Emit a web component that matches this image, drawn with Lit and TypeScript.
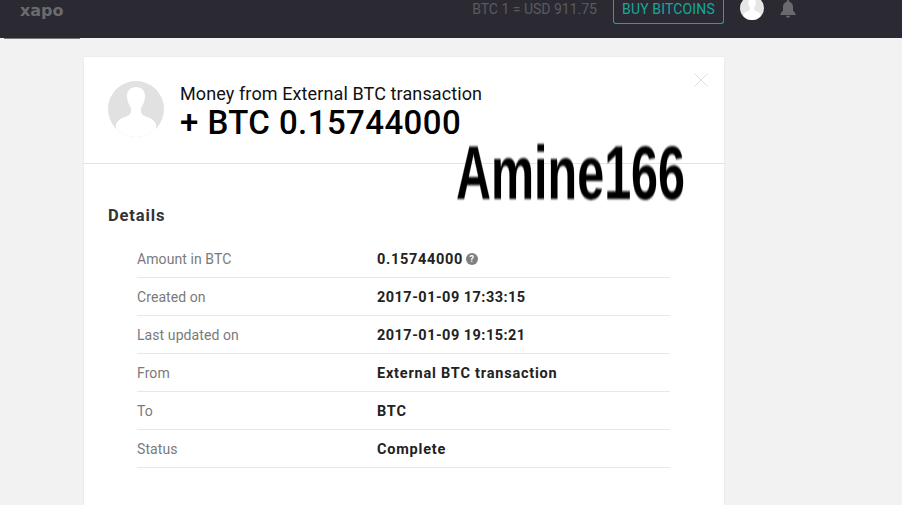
import { LitElement, html, css } from "lit";
import { customElement } from "lit/decorators.js";

const rows: [string, string, string][] = [
  ["Amount in BTC", "0.15744000", "num"],
  ["Created on", "2017-01-09 17:33:15", ""],
  ["Last updated on", "2017-01-09 19:15:21", ""],
  ["From", "External BTC transaction", "wide"],
  ["To", "BTC", "wide"],
  ["Status", "Complete", "wide"],
];

@customElement("app-root")
export class AppRoot extends LitElement {
  static styles = css`
    :host { display: block; height: 505px; overflow: hidden; background: #f2f2f2; font-family: Roboto, "Liberation Sans", sans-serif; position: relative; }
    .top { height: 38px; background: #2b2a33; display: flex; align-items: flex-start; position: relative; }
    .logo { width: 76px; margin-left: 4px; height: 39px; box-sizing: border-box; border-bottom: 1px solid #777; padding-left: 16px; font: 700 16px/21px "DejaVu Sans", sans-serif; color: #6b6b6f; letter-spacing: 0; }
    .spacer { flex: 1; }
    .rate { font-size: 14px; line-height: 19px; color: #5a5a60; margin-right: 16px; }
    .buy { width: 111px; height: 24px; box-sizing: border-box; border: 1px solid #14a89c; border-top: none; border-radius: 0 0 3px 3px; color: #14a89c; font-size: 14px; line-height: 18px; text-align: center; margin-right: 16px; letter-spacing: 0.15px; }
    .avatar { width: 24px; height: 24px; margin-top: -4px; margin-right: 16px; display: block; }
    .bell { width: 16px; height: 18px; margin-right: 106px; display: block; }
    .card { position: absolute; left: 84px; top: 57px; width: 640px; height: 470px; background: #fff; box-shadow: 0 0 2px rgba(0,0,0,0.08); }
    .head { height: 107px; box-sizing: border-box; border-bottom: 1px solid #e4e4e4; display: flex; padding: 24px 0 0 24px; position: relative; }
    .head svg.pic { width: 56px; height: 56px; margin-right: 16px; flex: none; }
    .t1 { font-size: 18px; line-height: 24px; color: #111; margin-top: 1px; letter-spacing: 0.11px; }
    .t2 { font-size: 33px; line-height: 34px; color: #000; font-weight: 500; letter-spacing: 0.43px; margin-top: 0; }
    .close { position: absolute; left: 610px; top: 16px; width: 14px; height: 14px; }
    h2 { margin: 42px 0 0 24px; font-size: 16.5px; line-height: 20px; font-weight: 700; color: #333; letter-spacing: 0.85px; }
    .rows { margin: 14px 54px 0 53px; }
    .row { height: 38px; box-sizing: border-box; border-bottom: 1px solid #e8e8e8; display: flex; align-items: center; font-size: 14px; color: #7a7a7a; letter-spacing: 0.08px; }
    .k { width: 240px; flex: none; }
    .v { font-size: 14.5px; font-weight: 700; color: #222; letter-spacing: 0.47px; display: flex; align-items: center; gap: 3px; padding-top: 1px; }
    .v.num { letter-spacing: 0.7px; }
    .v.wide { letter-spacing: 0.79px; }
    .q { width: 12px; height: 12px; display: block; }
    .mark { position: absolute; left: 456px; top: 116px; font: 700 48px/72px "Liberation Sans", sans-serif; color: #000; transform-origin: 0 0; transform: scale(1.01, 1.6); white-space: nowrap; filter: blur(0.5px); }
  `;

  render() {
    return html`
      <div class="top">
        <div class="logo">xapo</div>
        <div class="spacer"></div>
        <div class="rate">BTC 1 = USD 911.75</div>
        <div class="buy">BUY BITCOINS</div>
        <svg class="avatar" viewBox="0 0 56 56">
          <defs><clipPath id="a"><circle cx="28" cy="28" r="28" /></clipPath></defs>
          <circle cx="28" cy="28" r="28" fill="#e6e6e6" />
          <path clip-path="url(#a)" d="M28 6c-5.500 0-9 3.500-9 9 0 5 2 9 4 12v4c0 2-3 4-6 5-4 1-7 3-9 7v17h40V43c-2-4-5-6-9-7-3-1-6-3-6-5v-4c2-3 4-7 4-12 0-5.500-3.500-9-9-9z" fill="#fff" />
        </svg>
        <svg class="bell" viewBox="0 0 16 18">
          <path d="M8 0a1.300 1.300 0 0 0-1.300 1.300v.5C4.200 2.400 3 4.500 3 7v3.500L.5 13.500V15h15v-1.500L13 10.500V7c0-2.500-1.200-4.600-3.700-5.200v-.5A1.300 1.300 0 0 0 8 0zM6 15.800a2 2 0 0 0 4 0z" fill="#6a6a6e" />
        </svg>
      </div>
      <div class="card">
        <div class="head">
          <svg class="pic" viewBox="0 0 56 56">
            <defs><clipPath id="c"><circle cx="28" cy="28" r="28" /></clipPath></defs>
            <circle cx="28" cy="28" r="28" fill="#e1e1e1" />
            <path clip-path="url(#c)" d="M28 6c-5.500 0-9 3.500-9 9 0 5 2 9 4 12v4c0 2-3 4-6 5-4 1-7 3-9 7v17h40V43c-2-4-5-6-9-7-3-1-6-3-6-5v-4c2-3 4-7 4-12 0-5.500-3.500-9-9-9z" fill="#fff" />
          </svg>
          <div>
            <div class="t1">Money from External BTC transaction</div>
            <div class="t2">+ BTC 0.15744000</div>
          </div>
          <svg class="close" viewBox="0 0 14 14"><path d="M.5.500l13 13M13.500.500l-13 13" stroke="#ddd" stroke-width="1" fill="none" /></svg>
        </div>
        <h2>Details</h2>
        <div class="rows">
          ${rows.map(([k, v, c], i) => html`
            <div class="row">
              <div class="k">${k}</div>
              <div class="v ${c}">${v}${i === 0 ? html`<svg class="q" viewBox="0 0 12 12"><circle cx="6" cy="6" r="6" fill="#808080" /><text x="6" y="9.200" text-anchor="middle" font-size="9" font-weight="700" fill="#fff" font-family="Roboto">?</text></svg>` : ""}</div>
            </div>`)}
        </div>
      </div>
      <div class="mark">Amine166</div>
    `;
  }
}
